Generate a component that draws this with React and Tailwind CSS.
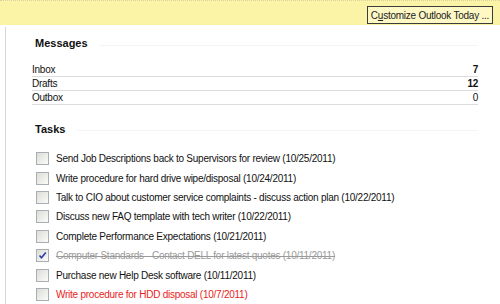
const messages = [
  { name: 'Inbox', count: '7', bold: true },
  { name: 'Drafts', count: '12', bold: true },
  { name: 'Outbox', count: '0', bold: false },
]

const tasks = [
  { text: 'Send Job Descriptions back to Supervisors for review (10/25/2011)' },
  { text: 'Write procedure for hard drive wipe/disposal (10/24/2011)' },
  { text: 'Talk to CIO about customer service complaints - discuss action plan (10/22/2011)' },
  { text: 'Discuss new FAQ template with tech writer (10/22/2011)' },
  { text: 'Complete Performance Expectations (10/21/2011)' },
  { text: 'Computer Standards - Contact DELL for latest quotes (10/11/2011)', done: true },
  { text: 'Purchase new Help Desk software (10/11/2011)' },
  { text: 'Write procedure for HDD disposal (10/7/2011)', overdue: true },
]

function Checkbox({ checked }) {
  return (
    <div className="w-[13px] h-[13px] border border-[#a9aeb5] bg-gradient-to-br from-[#dcdcd7] to-[#fbfbf9] flex items-center justify-center shrink-0">
      {checked && (
        <svg width="9" height="9" viewBox="0 0 9 9">
          <path d="M1.5 4.5 L3.5 6.8 L7.8 1.5" fill="none" stroke="#2a3fa8" strokeWidth="1.6" />
        </svg>
      )}
    </div>
  )
}

export default function App() {
  return (
    <div className="w-[500px] h-[304px] bg-white overflow-hidden text-[10px] tracking-[-0.25px] text-[#111]" style={{ fontFamily: '"Liberation Sans", Arial, sans-serif' }}>
      <div className="h-[25px] bg-[#fbf4a6] border-t border-dotted border-[#d8d2a0] flex items-start justify-end pr-[7px] pt-[5px]">
        <div className="border border-[#3c3c3c] bg-[#fdf8c4] px-[3px] h-[18px] flex items-center text-[10px] tracking-[-0.25px] text-[#222]">
          C<span className="underline">u</span>stomize Outlook Today ...
        </div>
      </div>
      <div className="ml-[5px] mt-[2px] border-l border-[#d6d6d6] h-full pl-[26px] pr-[22px]">
        <div className="pt-[8px] flex items-center gap-3 pl-[3px]">
          <div className="font-bold text-[11px] tracking-normal">Messages</div>
          <div className="flex-1 h-px bg-[#f2f4f8] mt-1" />
        </div>
        <div className="mt-[12px]">
          {messages.map(m => (
            <div key={m.name} className="flex justify-between h-[13.7px] items-center border-b border-[#dcdcdc]">
              <span>{m.name}</span>
              <span className={m.bold ? 'font-bold' : ''}>{m.count}</span>
            </div>
          ))}
        </div>
        <div className="pt-[16px] flex items-center gap-3 pl-[3px]">
          <div className="font-bold text-[11px] tracking-normal">Tasks</div>
          <div className="flex-1 h-px bg-[#f2f4f8] mt-1" />
        </div>
        <div className="mt-[12px] pl-[4px] flex flex-col">
          {tasks.map(t => (
            <div key={t.text} className="flex items-center gap-[7px] h-[19.4px] whitespace-nowrap">
              <Checkbox checked={t.done} />
              <span className={t.done ? 'line-through text-[#9a9a9a]' : t.overdue ? 'text-[#e8231b]' : ''}>
                {t.text}
              </span>
            </div>
          ))}
        </div>
      </div>
    </div>
  )
}
